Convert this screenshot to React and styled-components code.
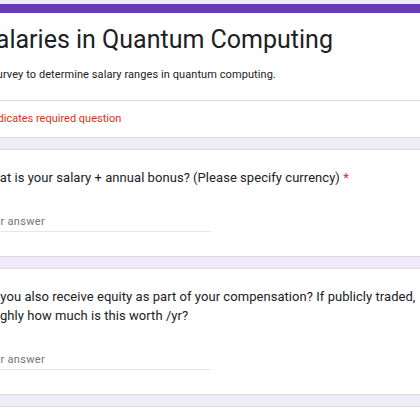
import React from "react";
import styled, { createGlobalStyle } from "styled-components";

const GlobalStyle = createGlobalStyle`
  html, body {
    margin: 0;
    padding: 0;
    background-color: #f0ebf8;
    overflow: hidden;
    font-family: Roboto, "Liberation Sans", sans-serif;
    color: #202124;
  }
`;

const StyledPage = styled.div`
  display: flex;
  flex-direction: column;
  gap: 11px;
  width: 760px;
  margin-left: -44px;
  padding-top: 4px;
`;

const StyledCard = styled.div`
  background-color: #ffffff;
  border: 1px solid #dadce0;
  border-radius: 8px;
  ${({ accent }) => accent && `border-top: 9px solid #673ab7;`}
  padding: ${({ pad }) => pad || "18px 24px 24px"};
`;

const StyledHeader = styled.div`
  padding: 11px 24px 17px;
  border-bottom: 1px solid #dadce0;
`;

const StyledTitle = styled.div`
  font-size: 25px;
  line-height: 32px;
`;

const StyledDescription = styled.div`
  margin-top: 11px;
  font-size: 11px;
  line-height: 16px;
  letter-spacing: 0.08px;
`;

const StyledRequired = styled.div`
  padding: 10px 24px 10px;
  font-size: 11px;
  line-height: 16px;
  color: #d93025;
`;

const StyledQuestion = styled.div`
  font-size: 13px;
  line-height: 19px;
  letter-spacing: 0.05px;
  max-width: ${({ wrapAt }) => wrapAt || "none"};
`;

const StyledStar = styled.span`
  color: #d93025;
`;

const StyledAnswer = styled.div`
  margin-top: 27px;
  width: 230px;
  padding-bottom: 1px;
  border-bottom: 1px solid #e8e8e8;
  font-size: 11px;
  line-height: 16px;
  letter-spacing: 0.3px;
  color: #70757a;
`;

const Question = ({ text, required, wrapAt }) => (
  <StyledCard>
    <StyledQuestion wrapAt={wrapAt}>
      {text}
      {required && <StyledStar> *</StyledStar>}
    </StyledQuestion>
    <StyledAnswer>Your answer</StyledAnswer>
  </StyledCard>
);

const App = () => {
  return (
    <>
      <GlobalStyle />
      <StyledPage>
        <StyledCard accent pad="0">
          <StyledHeader>
            <StyledTitle>Salaries in Quantum Computing</StyledTitle>
            <StyledDescription>
              A survey to determine salary ranges in quantum computing.
            </StyledDescription>
          </StyledHeader>
          <StyledRequired>* Indicates required question</StyledRequired>
        </StyledCard>
        <Question
          required
          text="What is your salary + annual bonus? (Please specify currency)"
        />
        <Question
          wrapAt="455px"
          text="Do you also receive equity as part of your compensation? If publicly traded, roughly how much is this worth /yr?"
        />
        <StyledCard pad="40px 24px" />
      </StyledPage>
    </>
  );
};

export default App;
